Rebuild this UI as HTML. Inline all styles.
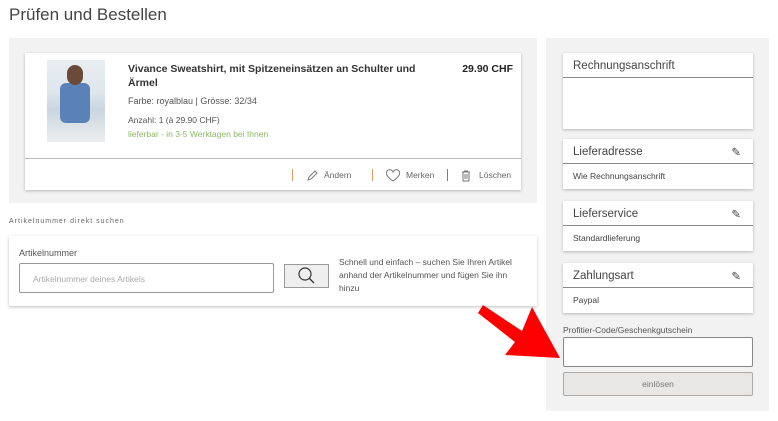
<!DOCTYPE html>
<html><head><meta charset="utf-8"><style>
*{box-sizing:border-box;margin:0;padding:0}
body{width:778px;height:421px;background:#fff;font-family:"Liberation Sans",sans-serif;color:#333;position:relative;overflow:hidden}
.abs{position:absolute}
h1{position:absolute;left:9px;top:5px;font-size:17px;font-weight:normal;color:#444}
.grey{background:#f2f2f2}
.card{background:#fff;box-shadow:0 1px 3px rgba(0,0,0,.25);position:absolute}
.sm{font-size:9px;color:#555}
.side .hd{height:25px;border-bottom:1px solid #888;font-size:11.5px;padding:7px 10px;color:#444;position:relative}
.side .bd{font-size:8.5px;padding:7px 10px;color:#444}
.pen{position:absolute;right:12px;top:6px}
.act{position:absolute;top:117px;font-size:8.5px;color:#666}
.bar{position:absolute;top:116px;width:1px;height:12px;background:#e0a060}
</style></head><body>
<h1>Prüfen und Bestellen</h1>
<div class="abs grey" style="left:9px;top:38px;width:528px;height:165px"></div>
<div class="card" style="left:25px;top:53px;width:496px;height:137px">
  <div class="abs" style="left:22px;top:7px;width:58px;height:82px;background:linear-gradient(180deg,#e8eef2 0%,#dfe6ec 40%,#c9d5e0 60%,#eee 100%)"></div>
  <div class="abs" style="left:35px;top:30px;width:30px;height:40px;background:#5a82b8;border-radius:6px"></div>
  <div class="abs" style="left:42px;top:12px;width:16px;height:20px;background:#6b4a3a;border-radius:8px"></div>
  <div class="abs" style="left:103px;top:9px;font-size:10.5px;font-weight:bold;line-height:14px;width:290px;color:#333">Vivance Sweatshirt, mit Spitzeneinsätzen an Schulter und Ärmel</div>
  <div class="abs" style="right:8px;top:10px;font-size:10.5px;font-weight:bold;color:#222">29.90 CHF</div>
  <div class="abs sm" style="left:103px;top:43px">Farbe: royalblau | Grösse: 32/34</div>
  <div class="abs sm" style="left:103px;top:62px;font-size:8.5px">Anzahl: 1 (à 29.90 CHF)</div>
  <div class="abs sm" style="left:103px;top:76px;font-size:8.5px;color:#8cb866">lieferbar - in 3-5 Werktagen bei Ihnen</div>
  <div class="abs" style="left:0;top:105px;width:100%;border-top:1px solid #bbb"></div>
  <div class="bar" style="left:267px"></div>
  <svg class="abs" style="left:281px;top:117px" width="12" height="12" viewBox="0 0 12 12"><path d="M2 10 L3 7 L9 1 L11 3 L5 9 Z" fill="none" stroke="#777" stroke-width="1"/></svg>
  <div class="act" style="left:299px">Ändern</div>
  <div class="bar" style="left:347px"></div>
  <svg class="abs" style="left:360px;top:115px" width="16" height="15" viewBox="0 0 16 15"><path d="M8 13 C2 9 1 6 1.5 4 C2.5 1 6.5 1 8 4 C9.5 1 13.5 1 14.5 4 C15 6 14 9 8 13 Z" fill="none" stroke="#777" stroke-width="1"/></svg>
  <div class="act" style="left:381px">Merken</div>
  <div class="bar" style="left:422px;background:#5a82b8"></div>
  <svg class="abs" style="left:436px;top:117px" width="10" height="12" viewBox="0 0 10 12"><path d="M1 2 H9 M3.5 2 V1 H6.5 V2 M2 2 V11 H8 V2 M4 4 V9 M6 4 V9" fill="none" stroke="#777" stroke-width="1"/></svg>
  <div class="act" style="left:454px">Löschen</div>
</div>
<div class="abs" style="left:9px;top:218px;font-size:7px;letter-spacing:1px;color:#666">Artikelnummer direkt suchen</div>
<div class="card" style="left:9px;top:236px;width:528px;height:70px">
  <div class="abs sm" style="left:10px;top:12px">Artikelnummer</div>
  <div class="abs" style="left:10px;top:27px;width:255px;height:30px;border:1px solid #999;border-radius:2px;font-size:8.5px;color:#aaa;padding:10px 13px">Artikelnummer deines Artikels</div>
  <div class="abs" style="left:275px;top:28px;width:45px;height:24px;border:1px solid #999;background:#eee"><svg width="43" height="22" viewBox="0 0 43 22"><circle cx="20" cy="9" r="6" fill="none" stroke="#333" stroke-width="1.2"/><line x1="24.5" y1="13.5" x2="29" y2="18" stroke="#333" stroke-width="1.3"/></svg></div>
  <div class="abs sm" style="left:330px;top:20px;width:190px;line-height:13px;font-size:8.5px">Schnell und einfach – suchen Sie Ihren Artikel anhand der Artikelnummer und fügen Sie ihn hinzu</div>
</div>
<div class="abs grey" style="left:546px;top:38px;width:223px;height:373px"></div>
<div class="side">
<div class="card" style="left:563px;top:53px;width:190px;height:76px"><div class="hd">Rechnungsanschrift</div></div>
<div class="card" style="left:563px;top:139px;width:190px;height:50px"><div class="hd">Lieferadresse<span class="pen">✎</span></div><div class="bd">Wie Rechnungsanschrift</div></div>
<div class="card" style="left:563px;top:201px;width:190px;height:50px"><div class="hd">Lieferservice<span class="pen">✎</span></div><div class="bd">Standardlieferung</div></div>
<div class="card" style="left:563px;top:263px;width:190px;height:50px"><div class="hd">Zahlungsart<span class="pen">✎</span></div><div class="bd">Paypal</div></div>
</div>
<div class="abs sm" style="left:563px;top:325px;font-size:8.5px">Profitier-Code/Geschenkgutschein</div>
<div class="abs" style="left:563px;top:337px;width:190px;height:30px;border:1px solid #888;border-radius:2px;background:#fff"></div>
<div class="abs" style="left:563px;top:372px;width:190px;height:24px;border:1px solid #aaa;border-radius:2px;background:#e8e7e5;font-size:8.5px;color:#777;text-align:center;line-height:22px">einlösen</div>
<svg class="abs" style="left:0;top:0" width="778" height="421"><polygon fill="#f00" points="483,305 522,331 532,307 560,358 505,355 515,342 478,313"/></svg>
</body></html>
